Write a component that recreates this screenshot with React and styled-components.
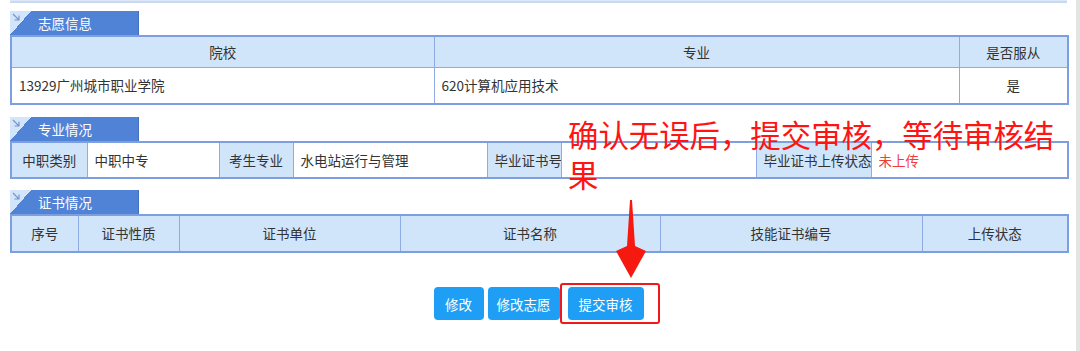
import React from "react"
import styled, { createGlobalStyle } from "styled-components"

const Global = createGlobalStyle`
    html, body {
        margin: 0;
        padding: 0;
        background: #fff;
    }
    body {
        font-family: "Noto Sans CJK SC", "Noto Sans", sans-serif;
    }
`

const Page = styled.div`
    position: relative;
    width: 1080px;
    height: 351px;
    box-sizing: border-box;
    padding: 0 9px 0 10px;
    border-right: 4px solid #e4e4e4;
    overflow: hidden;
`

const TopStrip = styled.div`
    height: 1px;
    background: #dde8f8;
    border-bottom: 2px solid #c9d9f2;
`

const Section = styled.div`
    margin-top: ${(p) => p.$gap}px;
`

const Tab = styled.div`
    position: relative;
    width: 129px;
    height: 24px;
    box-sizing: border-box;
    display: flex;
    align-items: center;
    padding-left: 28px;
    color: #fff;
    font-size: 13.5px;
    background:
        linear-gradient(to bottom right, #d2e5fa 50%, #5082d6 50%) left top / 21px 24px no-repeat,
        #5082d6;
    border-right: 1px solid #4470c2;
`

const TabArrow = styled.svg`
    position: absolute;
    left: 2px;
    top: 2px;
    width: 8px;
    height: 8px;
`

const Table = styled.table`
    width: 100%;
    table-layout: fixed;
    border-collapse: collapse;
    border: 2px solid #7d9fe1;
    font-size: 13.5px;
    line-height: 1.2;
    color: #333;
`

const Cell = styled.td`
    height: ${(p) => p.$h || 36}px;
    padding: 0 7px;
    border: 1px solid #8eabe6;
    background: ${(p) => (p.$head ? "#d0e5fa" : "#fff")};
    text-align: ${(p) => (p.$center ? "center" : "left")};
    color: ${(p) => p.$color || "#333"};
    white-space: nowrap;
    overflow: hidden;
    box-sizing: border-box;
`

const ButtonRow = styled.div`
    display: flex;
    justify-content: center;
    margin-top: 34px;
`

const Button = styled.button`
    position: relative;
    width: ${(p) => p.$w}px;
    height: 33px;
    margin-left: ${(p) => p.$ml || 0}px;
    border: none;
    border-radius: 4px;
    background: #1e9ff5;
    color: #fff;
    font-family: inherit;
    font-size: 13.5px;
    padding: 0;
`

const RedFrame = styled.span`
    position: absolute;
    left: -8px;
    top: -4px;
    width: 100px;
    height: 41px;
    box-sizing: border-box;
    border: 2px solid #f01818;
    border-radius: 3px;
    pointer-events: none;
`

const Note = styled.div`
    position: absolute;
    left: 568px;
    top: 119px;
    display: flex;
    flex-direction: column;
    align-items: flex-start;
    gap: 10px;
    font-size: 30.4px;
    line-height: 30px;
    color: #ff1414;
    white-space: nowrap;
`

const NoteLine = styled.span`
    display: block;
`

const Arrow = styled.svg`
    position: absolute;
    left: 611px;
    top: 198px;
    width: 40px;
    height: 84px;
`

const Header = ({ title }) => (
    <Tab>
        <TabArrow viewBox="0 0 8 8">
            <path d="M1 1 L7 7 M7 2.5 V7 H2.5" stroke="#7593c8" strokeWidth="1.1" fill="none" />
        </TabArrow>
        {title}
    </Tab>
)

const App = () => {
    return (
        <Page>
            <Global />
            <TopStrip />

            <Section $gap={8}>
                <Header title="志愿信息" />
                <Table>
                    <colgroup>
                        <col style={{ width: 423 }} />
                        <col style={{ width: 525 }} />
                        <col style={{ width: 109 }} />
                    </colgroup>
                    <tbody>
                        <tr>
                            <Cell $head $center $h={31}>院校</Cell>
                            <Cell $head $center $h={31}>专业</Cell>
                            <Cell $head $center $h={31}>是否服从</Cell>
                        </tr>
                        <tr>
                            <Cell $h={37}>13929广州城市职业学院</Cell>
                            <Cell $h={37}>620计算机应用技术</Cell>
                            <Cell $h={37} $center>是</Cell>
                        </tr>
                    </tbody>
                </Table>
            </Section>

            <Section $gap={12}>
                <Header title="专业情况" />
                <Table>
                    <colgroup>
                        <col style={{ width: 76 }} />
                        <col style={{ width: 132 }} />
                        <col style={{ width: 74 }} />
                        <col style={{ width: 194 }} />
                        <col style={{ width: 74 }} />
                        <col style={{ width: 195 }} />
                        <col style={{ width: 115 }} />
                        <col style={{ width: 197 }} />
                    </colgroup>
                    <tbody>
                        <tr>
                            <Cell $head $center>中职类别</Cell>
                            <Cell>中职中专</Cell>
                            <Cell $head $center>考生专业</Cell>
                            <Cell>水电站运行与管理</Cell>
                            <Cell $head $center>毕业证书号</Cell>
                            <Cell></Cell>
                            <Cell $head $center>毕业证书上传状态</Cell>
                            <Cell $color="#f03c3c">未上传</Cell>
                        </tr>
                    </tbody>
                </Table>
            </Section>

            <Section $gap={11}>
                <Header title="证书情况" />
                <Table>
                    <colgroup>
                        <col style={{ width: 67 }} />
                        <col style={{ width: 101 }} />
                        <col style={{ width: 221 }} />
                        <col style={{ width: 260 }} />
                        <col style={{ width: 262 }} />
                        <col style={{ width: 146 }} />
                    </colgroup>
                    <tbody>
                        <tr>
                            <Cell $head $center $h={37}>序号</Cell>
                            <Cell $head $center $h={37}>证书性质</Cell>
                            <Cell $head $center $h={37}>证书单位</Cell>
                            <Cell $head $center $h={37}>证书名称</Cell>
                            <Cell $head $center $h={37}>技能证书编号</Cell>
                            <Cell $head $center $h={37}>上传状态</Cell>
                        </tr>
                    </tbody>
                </Table>
            </Section>

            <ButtonRow>
                <Button $w={50}>修改</Button>
                <Button $w={72} $ml={4}>修改志愿</Button>
                <Button $w={76} $ml={8}>
                    提交审核
                    <RedFrame />
                </Button>
            </ButtonRow>

            <Note>
                <NoteLine>确认无误后，提交审核，等待审核结</NoteLine>
                <NoteLine>果</NoteLine>
            </Note>

            <Arrow viewBox="0 0 40 84">
                <path d="M19 2 L21 2 L24 48 L35 53 L20 80 L5 53 L16 48 Z" fill="#f5190f" />
            </Arrow>
        </Page>
    )
}

export default App
